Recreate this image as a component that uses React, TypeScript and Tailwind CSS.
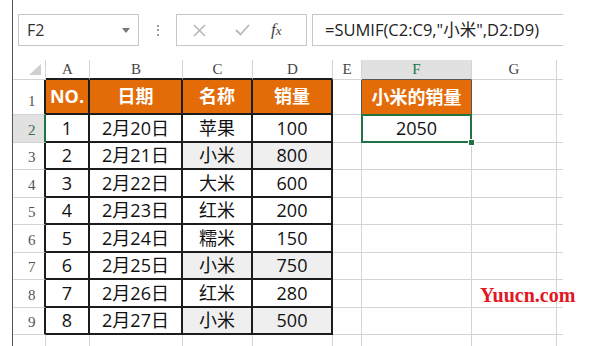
import React from 'react'

const letters = ['A', 'B', 'C', 'D', 'E', 'F', 'G', '']

const data = [
  ['1', '2月20日', '苹果', '100'],
  ['2', '2月21日', '小米', '800'],
  ['3', '2月22日', '大米', '600'],
  ['4', '2月23日', '红米', '200'],
  ['5', '2月24日', '糯米', '150'],
  ['6', '2月25日', '小米', '750'],
  ['7', '2月26日', '红米', '280'],
  ['8', '2月27日', '小米', '500'],
]

const cellFont = { fontFamily: '"Open Sans", "Noto Sans CJK SC", sans-serif' }
const hdrFont = { fontFamily: '"Liberation Serif", "Noto Sans CJK SC", serif' }

function FormulaBar() {
  return (
    <div className="flex items-stretch pt-[14px] pl-[5px] h-[46px]" style={cellFont}>
      <div className="w-[121px] border border-[#c6c6c6] flex items-center justify-between pl-[8px] pr-[8px] text-[16px] text-[#333]">
        <span>F2</span>
        <svg width="8" height="5" viewBox="0 0 8 5">
          <polygon points="0,0 8,0 4,5" fill="#777" />
        </svg>
      </div>
      <div className="w-[37px] flex flex-col items-center justify-center gap-[2.5px]">
        <span className="w-[2px] h-[2px] bg-[#9a9a9a]" />
        <span className="w-[2px] h-[2px] bg-[#9a9a9a]" />
        <span className="w-[2px] h-[2px] bg-[#9a9a9a]" />
      </div>
      <div className="w-[131px] border border-[#c6c6c6] flex items-center pl-[16px]">
        <svg width="13" height="13" viewBox="0 0 13 13">
          <path d="M1 1 L12 12 M12 1 L1 12" stroke="#b8b8b8" strokeWidth="1.6" />
        </svg>
        <svg className="ml-[29px]" width="15" height="12" viewBox="0 0 15 12">
          <path d="M1 6 L5.5 10.5 L14 1" stroke="#b8b8b8" strokeWidth="1.8" fill="none" />
        </svg>
        <span className="ml-[21px] italic text-[17px] text-[#444]" style={hdrFont}>
          f<span className="text-[13px]">x</span>
        </span>
      </div>
      <div className="ml-[5px] w-[251px] border border-[#c6c6c6] border-r-0 flex items-center pl-[12px] text-[16.5px] text-[#222] whitespace-nowrap">
        =SUMIF(C2:C9,"小米",D2:D9)
      </div>
    </div>
  )
}

function ColHeader() {
  return (
    <>
      <div className="border-r border-b border-[#d4d4d4] flex items-end justify-end pr-[4px] pb-[4px]">
        <svg width="12" height="11" viewBox="0 0 12 11">
          <polygon points="12,0 12,11 0,11" fill="#cfcfcf" />
        </svg>
      </div>
      {letters.map((l, i) => {
        let cls = 'border-r border-b border-[#d4d4d4] text-[#444]'
        if (i < 4) cls = 'border-r border-r-[#d4d4d4] border-b-2 border-b-[#1c1c1c] text-[#444]'
        if (i === 5) cls = 'border-r border-r-[#d4d4d4] border-b border-b-[#555] bg-[#e1e1e1] text-[#217346]'
        if (i === 7) cls = 'border-b border-[#d4d4d4]'
        return (
          <div key={l + i} className={`${cls} flex items-center justify-center text-[15px]`} style={hdrFont}>
            {l}
          </div>
        )
      })}
    </>
  )
}

export default function App() {
  return (
    <div className="w-[590px] h-[346px] bg-white overflow-hidden relative">
      <div className="ml-[12px] h-full border-l border-[#555]">
        <FormulaBar />
        <div className="mt-[14px] grid grid-cols-[33px_44px_93px_70px_80px_29px_110px_85px_6px] grid-rows-[20px_35px_28px_27px_28px_27px_28px_27px_28px_27px_11px]">
          <ColHeader />

          {/* row 1 */}
          <div className="border-b border-b-[#d4d4d4] border-r-2 border-r-[#1c1c1c] flex items-end pl-[15px] pb-[2px] text-[15px] text-[#555]" style={hdrFont}>
            1
          </div>
          {['NO.', '日期', '名称', '销量'].map((t) => (
            <div
              key={t}
              className="bg-[#e36c09] border-r-2 border-b-2 border-[#1c1c1c] flex items-center justify-center text-white font-bold text-[18px]"
              style={cellFont}
            >
              {t}
            </div>
          ))}
          <div className="border-r border-r-[#555] border-b border-b-[#d4d4d4]" />
          <div className="bg-[#e36c09] border-r border-r-[#555] flex items-center justify-center text-white font-bold text-[18px]" style={cellFont}>
            小米的销量
          </div>
          <div className="border-r border-b border-[#d4d4d4]" />
          <div className="border-b border-[#d4d4d4]" />

          {data.map((r, ri) => {
            const hl = r[2] === '小米'
            const rowHdr =
              ri === 0
                ? 'bg-[#e1e1e1] border-b border-b-[#d4d4d4] border-r-2 border-r-[#217346] text-[#3b6b4e]'
                : 'border-b border-b-[#d4d4d4] border-r-2 border-r-[#1c1c1c] text-[#555]'
            return (
              <React.Fragment key={ri}>
                <div className={`${rowHdr} flex items-end pl-[15px] pb-[1px] text-[15px]`} style={hdrFont}>
                  {ri + 2}
                </div>
                {r.map((v, ci) => (
                  <div
                    key={ci}
                    className={`${hl && ci >= 2 ? 'bg-[#efefef]' : 'bg-white'} border-r-2 border-b-2 border-[#1c1c1c] flex items-center justify-center text-[18px] text-[#111]`}
                    style={cellFont}
                  >
                    {v}
                  </div>
                ))}
                <div className="border-r border-b border-[#d4d4d4]" />
                {ri === 0 ? (
                  <div className="relative border-r border-b border-[#d4d4d4] flex items-center justify-center text-[18px] text-[#111]" style={cellFont}>
                    2050
                    <div className="absolute -left-[1px] -top-[1px] -right-[1px] -bottom-[1px] border-2 border-[#217346]" />
                    <div className="absolute -right-[4px] -bottom-[4px] w-[7px] h-[7px] bg-[#217346] border border-white" />
                  </div>
                ) : (
                  <div className="border-r border-b border-[#d4d4d4]" />
                )}
                <div className="border-r border-b border-[#d4d4d4]" />
                <div className="border-b border-[#d4d4d4]" />
              </React.Fragment>
            )
          })}

          {/* row 10 partial */}
          <div className="border-r border-[#d4d4d4]" />
          {letters.map((l, i) => (
            <div key={'r10' + i} className={i === 7 ? '' : 'border-r border-[#d4d4d4]'} />
          ))}
        </div>
      </div>
      <div
        className="absolute left-[480px] top-[280px] text-[20px] font-bold text-[#e3171f]"
        style={{ fontFamily: '"Liberation Serif", serif' }}
      >
        Yuucn.com
      </div>
    </div>
  )
}
